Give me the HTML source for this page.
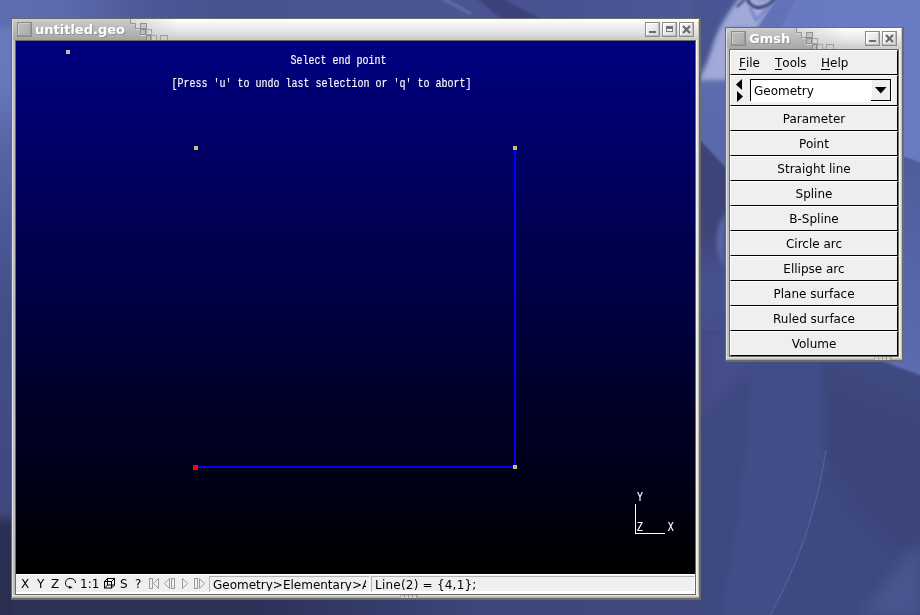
<!DOCTYPE html>
<html>
<head>
<meta charset="utf-8">
<title>Gmsh</title>
<style>
html,body{margin:0;padding:0;}
body{width:920px;height:615px;overflow:hidden;position:relative;
  font-family:"DejaVu Sans","Liberation Sans",sans-serif;font-size:12px;color:#000;
  background:#46508a;}
#desk{position:absolute;left:0;top:0;width:920px;height:615px;}
.abs{position:absolute;}
.win{position:absolute;background:#c4c4c4;will-change:transform;}
.win .o1{position:absolute;left:0;top:0;right:0;bottom:0;background:#6a6a66;}
.win .o2{position:absolute;left:1px;top:1px;right:2px;bottom:2px;background:linear-gradient(to right,#dedede,#e4e4e4 120px,#ffffff 170px);}
.win .o3{position:absolute;left:2px;top:2px;right:2px;bottom:2px;
  background:linear-gradient(to bottom,#c8c8c8 0px,#c0c0c0 22px,#c0c0c0 100%);}
.rb{position:absolute;top:2px;bottom:2px;right:2px;width:3px;background:linear-gradient(to right,#ffffff,#e2e2e2 50%,#b4b4b4);}
.tb{position:absolute;left:2px;top:1px;right:3px;height:21px;}
.tbl{position:absolute;left:0;top:0;height:21px;background:linear-gradient(to bottom,#cdcdcd 0,#c2c2c2 4px,#b4b4b4 12px,#a2a2a2 21px);}
.tbr{position:absolute;top:0;right:0;height:21px;background:linear-gradient(to bottom,#ffffff 0,#f4f4f4 4px,#e2e2e2 12px,#c9c9c9 21px);}
.title{position:absolute;top:0;height:21px;line-height:21px;font-weight:bold;font-size:13px;color:#fff;
  text-shadow:1px 1px 0 rgba(70,70,70,0.3);white-space:nowrap;}
.mbtn{position:absolute;width:15px;height:15px;box-sizing:border-box;border:1px solid #8a8a8a;
  background:linear-gradient(135deg,#c0c0c0,#a8a8a8);box-shadow:inset -1px -1px 0 #989898, inset 1px 1px 0 #cccccc;}
.wbtn{position:absolute;width:15px;height:15px;box-sizing:border-box;border:1px solid #8c8c8c;
  background:linear-gradient(135deg,#fbfbfb,#d6d6d6);box-shadow:inset -1px -1px 0 #bdbdbd, inset 1px 1px 0 #ffffff;}
.mi b{font-weight:normal;display:inline-block;position:relative;}
.mi b::after{content:"";position:absolute;left:0;right:0;top:18px;height:1px;background:#000;}
.mono{font-family:"Liberation Mono","DejaVu Sans Mono",monospace;}
.row{position:absolute;left:0;width:168px;height:25px;box-sizing:border-box;background:#efefef;
  border-top:1px solid #fff;border-left:1px solid #fff;border-bottom:1px solid #000;border-right:1px solid #000;
  text-align:center;line-height:25px;white-space:nowrap;}
</style>
</head>
<body>
<svg id="desk" width="920" height="615" viewBox="0 0 920 615">
  <defs>
    <linearGradient id="lft" gradientUnits="userSpaceOnUse" x1="0" y1="0" x2="0" y2="615"><stop offset="0.0000" stop-color="#5e6cb0"/><stop offset="0.0358" stop-color="#5e6cb0"/><stop offset="0.0553" stop-color="#6a7ac0"/><stop offset="0.1463" stop-color="#6676ba"/><stop offset="0.2439" stop-color="#5663a4"/><stop offset="0.4878" stop-color="#444f8a"/><stop offset="0.7317" stop-color="#404982"/><stop offset="0.8325" stop-color="#3e477e"/><stop offset="0.8537" stop-color="#2b3054"/><stop offset="1.0000" stop-color="#2a2e50"/></linearGradient>
    <linearGradient id="topg" x1="0" y1="0" x2="1" y2="0"><stop offset="0.0000" stop-color="#5e6cb0"/><stop offset="0.0652" stop-color="#5c6aae"/><stop offset="0.1630" stop-color="#4d5796"/><stop offset="0.2391" stop-color="#48528f"/><stop offset="0.4674" stop-color="#4a5592"/><stop offset="0.6087" stop-color="#485290"/><stop offset="0.7609" stop-color="#4e5896"/><stop offset="1.0000" stop-color="#4e5896"/></linearGradient>
    <linearGradient id="botg" x1="0" y1="0" x2="1" y2="0"><stop offset="0.0000" stop-color="#2b3056"/><stop offset="0.2717" stop-color="#2c3158"/><stop offset="0.4348" stop-color="#363e6e"/><stop offset="0.5109" stop-color="#3c4678"/><stop offset="0.7609" stop-color="#404a80"/><stop offset="0.8315" stop-color="#414b82"/><stop offset="0.8424" stop-color="#48548e"/><stop offset="1.0000" stop-color="#46528c"/></linearGradient>
    <linearGradient id="midg" gradientUnits="userSpaceOnUse" x1="0" y1="0" x2="0" y2="615"><stop offset="0.0000" stop-color="#4a5490"/><stop offset="0.0293" stop-color="#566098"/><stop offset="0.0390" stop-color="#98a2d2"/><stop offset="0.0732" stop-color="#909acc"/><stop offset="0.1138" stop-color="#6672b4"/><stop offset="0.1463" stop-color="#5c6aae"/><stop offset="0.2195" stop-color="#5a68ac"/><stop offset="0.3252" stop-color="#5a68ac"/><stop offset="0.3268" stop-color="#3c4478"/><stop offset="0.3740" stop-color="#3d4579"/><stop offset="0.4472" stop-color="#46508c"/><stop offset="1.0000" stop-color="#424c84"/></linearGradient>
    <linearGradient id="rgt" gradientUnits="userSpaceOnUse" x1="904" y1="0" x2="688.700" y2="576.300"><stop offset="0.0000" stop-color="#6c7cc4"/><stop offset="0.2362" stop-color="#6a7ac2"/><stop offset="0.2400" stop-color="#4f5c9c"/><stop offset="0.3047" stop-color="#5260a2"/><stop offset="0.4418" stop-color="#5866aa"/><stop offset="0.5333" stop-color="#5a68ae"/><stop offset="0.5592" stop-color="#5e6cb2"/><stop offset="0.5652" stop-color="#3f4a82"/><stop offset="0.6399" stop-color="#3c4679"/><stop offset="0.6094" stop-color="#3e4881" stop-opacity="0"/></linearGradient>
    <filter id="bl1" x="-20%" y="-20%" width="140%" height="140%"><feGaussianBlur stdDeviation="0.8"/></filter>
    <filter id="bl2" x="-20%" y="-20%" width="140%" height="140%"><feGaussianBlur stdDeviation="2"/></filter>
    <filter id="bl3" x="-20%" y="-20%" width="140%" height="140%"><feGaussianBlur stdDeviation="3"/></filter>
    <filter id="bl6" x="-30%" y="-30%" width="160%" height="160%"><feGaussianBlur stdDeviation="7"/></filter>
  </defs>
  <rect x="0" y="0" width="920" height="615" fill="#444e88"/>
  <rect x="0" y="0" width="920" height="22" fill="url(#topg)"/>
  <path d="M476 -2L502 -2L546 22L506 22Z" fill="#3b437a" filter="url(#bl1)"/>
  <path d="M438 -2L446 -2L474 14L468 14Z" fill="#606cab" filter="url(#bl1)"/>
  <rect x="0" y="596" width="920" height="19" fill="url(#botg)"/>
  <rect x="0" y="0" width="14" height="615" fill="url(#lft)"/>
  <!-- right block -->
  <rect x="698" y="0" width="222" height="615" fill="#3e4881"/>
  <rect x="698" y="0" width="30" height="330" fill="url(#midg)"/>
  <!-- top swoosh area -->
  <rect x="728" y="0" width="192" height="200" fill="#6a7ac2"/>
  <path d="M698 -4H777L757 28H728V80H698Z" fill="#a0a9d7" filter="url(#bl2)"/>
  <path d="M778 -2H796L780 30H757Z" fill="#6372b6" filter="url(#bl1)"/>
  <path d="M692 -6H742Q730 10 723 22T712 48T701 75L692 90Z" fill="#4a5492" filter="url(#bl2)"/>
  <path d="M750 8L756 20L774 2" fill="none" stroke="#7888cc" stroke-width="3" filter="url(#bl1)"/>
  <path d="M737 7L745 -1" fill="none" stroke="#3a4070" stroke-width="2" filter="url(#bl1)"/>
  <path d="M747 -1Q750 6 757 7.500T775 -1" fill="none" stroke="#3a4070" stroke-width="3" filter="url(#bl1)"/>
  <path d="M756 -1Q762 4 770 -1Z" fill="#8694cc" filter="url(#bl1)"/>
  <path d="M696 136L730 172V204H696Z" fill="#3c4478" filter="url(#bl1)"/>
  <!-- lens between windows -->
  <path d="M726 212Q708 236 724 268Z" fill="#5a66a8" filter="url(#bl2)"/>
  <!-- lower right block shading -->
  <g>
    <path d="M700 330H760V362L700 420Z" fill="#444e89" filter="url(#bl6)"/>
    <path d="M754 340H826V450Q812 540 770 615H720Q744 520 754 340Z" fill="#434e88" filter="url(#bl3)"/>
    <path d="M826 362H920V560Q860 520 826 450Z" fill="#3b4578" filter="url(#bl6)"/>
    <path d="M860 615L920 540V615Z" fill="#48548e" filter="url(#bl6)"/>
    <path d="M770 615Q812 540 826 450" fill="none" stroke="#5c69a6" stroke-width="1.200" opacity="0.700"/>
    <rect x="826" y="0" width="94" height="420" fill="url(#rgt)"/>
  </g>
</svg>

<!-- ================= main window ================= -->
<div class="win" style="left:11px;top:18px;width:690px;height:582px;">
  <div class="o1"></div><div class="o2"></div><div class="o3"></div><div class="rb"></div>
  <div class="tb">
    <svg class="abs" style="left:0;top:0" width="685" height="21" viewBox="0 0 685 21">
      <defs>
        <linearGradient id="gl685" x1="0" y1="0" x2="0" y2="1"><stop offset="0" stop-color="#cfcfcf"/><stop offset="0.2" stop-color="#c4c4c4"/><stop offset="0.6" stop-color="#b6b6b6"/><stop offset="1" stop-color="#a6a6a6"/></linearGradient>
        <linearGradient id="gr685" x1="0" y1="0" x2="0" y2="1"><stop offset="0" stop-color="#ffffff"/><stop offset="0.2" stop-color="#f6f6f6"/><stop offset="0.6" stop-color="#e4e4e4"/><stop offset="1" stop-color="#cacaca"/></linearGradient>
      </defs>
      <rect x="0" y="0" width="685" height="21" fill="url(#gl685)"/>
      <path d="M118 0V4H123V9H127V15H133V21H685V0Z" fill="url(#gr685)"/>
      <defs><linearGradient id="gh685" gradientUnits="userSpaceOnUse" x1="118.0" y1="0" x2="166.0" y2="0"><stop offset="0" stop-color="#b8b8b8" stop-opacity="0.5"/><stop offset="1" stop-color="#b8b8b8" stop-opacity="0"/></linearGradient></defs><path d="M118 0V4H123V9H127V15H133V21H685V0Z" fill="url(#gh685)"/>
      <path d="M117.5 0V4.5H122.5V9.5H127" fill="none" stroke="#969696"/>
      <path d="M118 5.5H121.5M123 10.5H127M127 16.5H133" fill="none" stroke="#d8d8d8"/>
      <rect x="127.5" y="4.5" width="6" height="5" fill="#c6c6c6" stroke="#929292"/>
      <rect x="127.5" y="10.5" width="5" height="5" fill="#bcbcbc" stroke="#8c8c8c"/>
      <rect x="133.5" y="10.5" width="5" height="5" fill="#d6d6d6" stroke="#a4a4a4"/>
      <rect x="133.5" y="16.5" width="4" height="5" fill="#bcbcbc" stroke="#8c8c8c"/>
      <rect x="138.5" y="16.5" width="5" height="5" fill="#d0d0d0" stroke="#a4a4a4"/>
      <rect x="147.5" y="16.5" width="7" height="5" fill="#cccccc" stroke="#a0a0a0"/>
    </svg>
    <div class="title" style="left:22px;">untitled.geo</div>
  </div>
  <div class="mbtn" style="left:6px;top:4px;"></div>
  <div class="wbtn" style="left:634px;top:4px;"><div class="abs" style="left:3px;top:8px;width:7px;height:2px;background:#6c6c6c"></div></div>
  <div class="wbtn" style="left:651px;top:4px;"><div class="abs" style="left:3px;top:3px;width:7px;height:6px;box-sizing:border-box;border:1px solid #787878;border-top:3px solid #6e6e6e;background:#f4f4f4"></div></div>
  <div class="wbtn" style="left:668px;top:4px;">
    <svg class="abs" style="left:0;top:0" width="13" height="13" viewBox="0 0 13 13"><path d="M3 3L10 10M10 3L3 10" stroke="#6a6a6a" stroke-width="2.200" fill="none"/></svg>
  </div>
  <!-- inner frame -->
  <div class="abs" style="left:4px;top:22px;width:681px;height:555px;background:#6a6a62;"></div>
  <!-- GL canvas -->
  <div class="abs" style="left:5px;top:23px;width:679px;height:533px;background:linear-gradient(to bottom,#000080,#000000);overflow:hidden;">
    <svg class="abs" style="left:0;top:0" width="679" height="533" viewBox="16 41 679 533" shape-rendering="crispEdges">
      <rect x="514" y="150" width="2" height="316" fill="#0000ff"/>
      <rect x="198" y="466" width="316" height="2" fill="#0000ff"/>
      <rect x="66" y="50" width="4" height="4" fill="#c8c6b2"/><rect x="67" y="51" width="2" height="2" fill="#b2b2ae"/>
      <rect x="194" y="146" width="4" height="4" fill="#c6c680"/><rect x="195" y="147" width="2" height="2" fill="#b4b47c"/>
      <rect x="513" y="146" width="4" height="4" fill="#c6c680"/><rect x="514" y="147" width="2" height="2" fill="#b4b47c"/>
      <rect x="513" y="465" width="4" height="4" fill="#c6c680"/><rect x="514" y="466" width="2" height="2" fill="#b4b47c"/>
      <rect x="193" y="465" width="5" height="5" fill="#ff0000"/>
      <rect x="635" y="504" width="1" height="30" fill="#ffffff"/>
      <rect x="635" y="533" width="30" height="1" fill="#ffffff"/>
      <g class="mono" fill="#ffffff" stroke="#ffffff" stroke-width="0.150" font-size="12.5" shape-rendering="auto" style="font-family:'Liberation Mono','DejaVu Sans Mono',monospace">
        <text x="290.500" y="64" textLength="96" lengthAdjust="spacingAndGlyphs">Select end point</text>
        <text x="171.500" y="87" textLength="300" lengthAdjust="spacingAndGlyphs">[Press 'u' to undo last selection or 'q' to abort]</text>
        <text x="637" y="501" textLength="6" lengthAdjust="spacingAndGlyphs">Y</text>
        <text x="637" y="531" textLength="6" lengthAdjust="spacingAndGlyphs">Z</text>
        <text x="667.800" y="531" textLength="6" lengthAdjust="spacingAndGlyphs">X</text>
      </g>
    </svg>
  </div>
  <!-- status bar -->
  <div class="abs" style="left:5px;top:556px;width:679px;height:20px;background:#efefef;box-shadow:inset 0 1px 0 #fff, inset 0 -2px 0 #fff;overflow:hidden;">
    <div class="abs" style="left:4px;top:0;line-height:20px;white-space:nowrap;">
      <span class="abs" style="left:1px">X</span><span class="abs" style="left:17px">Y</span><span class="abs" style="left:31px">Z</span>
      <span class="abs" style="left:60px">1:1</span><span class="abs" style="left:100px">S</span><span class="abs" style="left:115px">?</span>
    </div>
    <svg class="abs" style="left:0;top:0" width="210" height="20" viewBox="16 574 210 20" fill="none">
      <path d="M75.500 583A5 4.500 0 1 0 69.500 587.400" stroke="#000" stroke-width="1"/>
      <path d="M69 585.800l3.800 1.600l-3.800 1.400z" fill="#000"/>
      <g stroke="#000" stroke-width="1">
        <rect x="104.5" y="581.5" width="7" height="6.5"/>
        <rect x="107.5" y="578.5" width="7" height="6.5"/>
        <path d="M104.5 581.5l3-3M111.5 581.5l3-3M104.5 588l3-3M111.5 588l3-3"/>
      </g>
      <g stroke="#9c9c9c" stroke-width="1">
        <rect x="149.5" y="578.5" width="3" height="10"/><path d="M158.5 578.5v10l-5-5z"/>
        <path d="M169.5 578.5v10l-5-5z"/><rect x="171.500" y="578.5" width="3" height="10"/>
        <path d="M182.5 578.5v10l5-5z"/>
        <rect x="194.500" y="578.5" width="3" height="10"/><path d="M199.5 578.5v10l5-5z"/>
      </g>
    </svg>
    <div class="abs" style="left:193px;top:2px;width:161px;height:16px;box-sizing:border-box;border-left:1px solid #b4b4b4;border-top:1px solid #b4b4b4;border-right:1px solid #fff;border-bottom:1px solid #fff;overflow:hidden;">
      <div class="abs" style="left:0;top:0;width:156px;height:16px;overflow:hidden;"><div class="abs" style="left:3px;top:-2px;line-height:20px;white-space:nowrap;">Geometry&gt;Elementary&gt;Add</div></div>
    </div>
    <div class="abs" style="left:355px;top:2px;width:324px;height:16px;box-sizing:border-box;border-left:1px solid #b4b4b4;border-top:1px solid #b4b4b4;border-right:1px solid #fff;border-bottom:1px solid #fff;overflow:hidden;">
      <div class="abs" style="left:3px;top:-2px;line-height:20px;white-space:nowrap;letter-spacing:0.220px;">Line(2) = {4,1};</div>
    </div>
  </div>
  <!-- bottom grip -->
  <div class="abs" style="left:2px;top:577px;width:686px;height:3px;background:linear-gradient(to bottom,#f0f0f0,#c8c8c8,#a0a0a0);"></div>
  <svg class="abs" style="left:388px;top:577px" width="20" height="3" viewBox="0 0 20 3"><defs><linearGradient id="gg1" x1="0" y1="0" x2="1" y2="0"><stop offset="0" stop-color="#a8a8a8" stop-opacity="0"/><stop offset="0.12" stop-color="#a0a0a0"/><stop offset="0.88" stop-color="#a0a0a0"/><stop offset="1" stop-color="#a8a8a8" stop-opacity="0"/></linearGradient></defs><rect width="20" height="3" fill="url(#gg1)"/><rect x="2" y="0" width="3" height="3" fill="#d0d0d0"/><rect x="6" y="0" width="3" height="3" fill="#d0d0d0"/><rect x="10" y="0" width="3" height="3" fill="#d0d0d0"/><rect x="14" y="0" width="3" height="3" fill="#d0d0d0"/></svg>
</div>

<!-- ================= Gmsh menu window ================= -->
<div class="win" style="left:725px;top:27px;width:179px;height:335px;">
  <div class="o1"></div><div class="o2"></div><div class="o3"></div><div class="rb"></div>
  <div class="tb">
    <svg class="abs" style="left:0;top:0" width="174" height="21" viewBox="0 0 174 21">
      <defs>
        <linearGradient id="gl174" x1="0" y1="0" x2="0" y2="1"><stop offset="0" stop-color="#cfcfcf"/><stop offset="0.2" stop-color="#c4c4c4"/><stop offset="0.6" stop-color="#b6b6b6"/><stop offset="1" stop-color="#a6a6a6"/></linearGradient>
        <linearGradient id="gr174" x1="0" y1="0" x2="0" y2="1"><stop offset="0" stop-color="#ffffff"/><stop offset="0.2" stop-color="#f6f6f6"/><stop offset="0.6" stop-color="#e4e4e4"/><stop offset="1" stop-color="#cacaca"/></linearGradient>
      </defs>
      <rect x="0" y="0" width="174" height="21" fill="url(#gl174)"/>
      <path d="M70 0V4H75V9H79V15H85V21H174V0Z" fill="url(#gr174)"/>
      <defs><linearGradient id="gh174" gradientUnits="userSpaceOnUse" x1="70.0" y1="0" x2="118.0" y2="0"><stop offset="0" stop-color="#b8b8b8" stop-opacity="0.5"/><stop offset="1" stop-color="#b8b8b8" stop-opacity="0"/></linearGradient></defs><path d="M70 0V4H75V9H79V15H85V21H174V0Z" fill="url(#gh174)"/>
      <path d="M69.5 0V4.5H74.5V9.5H79" fill="none" stroke="#969696"/>
      <path d="M70 5.5H73.5M75 10.5H79M79 16.5H85" fill="none" stroke="#d8d8d8"/>
      <rect x="79.5" y="4.5" width="6" height="5" fill="#c6c6c6" stroke="#929292"/>
      <rect x="79.5" y="10.5" width="5" height="5" fill="#bcbcbc" stroke="#8c8c8c"/>
      <rect x="85.5" y="10.5" width="5" height="5" fill="#d6d6d6" stroke="#a4a4a4"/>
      <rect x="85.5" y="16.5" width="4" height="5" fill="#bcbcbc" stroke="#8c8c8c"/>
      <rect x="90.5" y="16.5" width="5" height="5" fill="#d0d0d0" stroke="#a4a4a4"/>
      <rect x="99.5" y="16.5" width="7" height="5" fill="#cccccc" stroke="#a0a0a0"/>
    </svg>
    <div class="title" style="left:22px;">Gmsh</div>
  </div>
  <div class="mbtn" style="left:6px;top:4px;"></div>
  <div class="wbtn" style="left:140px;top:4px;"><div class="abs" style="left:3px;top:8px;width:7px;height:2px;background:#6c6c6c"></div></div>
  <div class="wbtn" style="left:157px;top:4px;">
    <svg class="abs" style="left:0;top:0" width="13" height="13" viewBox="0 0 13 13"><path d="M3 3L10 10M10 3L3 10" stroke="#6a6a6a" stroke-width="2.200" fill="none"/></svg>
  </div>
  <div class="abs" style="left:4px;top:22px;width:170px;height:308px;background:#6a6a62;"></div>
  <div class="abs" style="left:5px;top:23px;width:168px;height:306px;background:#efefef;">
    <!-- menubar -->
    <div class="row" style="top:0;height:25px;text-align:left;">
      <span class="abs mi" style="left:8px;top:0"><b>F</b>ile</span>
      <span class="abs mi" style="left:44px;top:0"><b>T</b>ools</span>
      <span class="abs mi" style="left:90px;top:0"><b>H</b>elp</span>
    </div>
    <div class="row" style="top:25px;height:31px;">
      <svg class="abs" style="left:0;top:0" width="166" height="29" viewBox="731 76 166 29">
        <path d="M742 79v11l-6-5.500z" fill="#000"/>
        <path d="M737 91v11l6-5.500z" fill="#000"/>
        <rect x="750" y="79" width="142" height="23" fill="#fff"/>
        <rect x="750" y="79" width="141" height="1" fill="#000"/>
        <rect x="750" y="79" width="1" height="22" fill="#000"/>
        <rect x="872" y="80" width="18" height="20" fill="#efefef"/>
        <rect x="871" y="100" width="20" height="1" fill="#000"/>
        <rect x="890" y="80" width="1" height="21" fill="#000"/>
        <path d="M875 87h11.500l-5.750 6.500z" fill="#000"/>
      </svg>
      <span class="abs" style="left:23px;top:3px;">Geometry</span>
    </div>
    <div class="row" style="top:56px;">Parameter</div>
    <div class="row" style="top:81px;">Point</div>
    <div class="row" style="top:106px;">Straight line</div>
    <div class="row" style="top:131px;">Spline</div>
    <div class="row" style="top:156px;">B-Spline</div>
    <div class="row" style="top:181px;">Circle arc</div>
    <div class="row" style="top:206px;">Ellipse arc</div>
    <div class="row" style="top:231px;">Plane surface</div>
    <div class="row" style="top:256px;">Ruled surface</div>
    <div class="row" style="top:281px;">Volume</div>
  </div>
  <div class="abs" style="left:2px;top:330px;width:175px;height:3px;background:linear-gradient(to bottom,#f0f0f0,#c8c8c8,#a0a0a0);"></div>
  <svg class="abs" style="left:148px;top:330px" width="20" height="3" viewBox="0 0 20 3"><defs><linearGradient id="gg2" x1="0" y1="0" x2="1" y2="0"><stop offset="0" stop-color="#a8a8a8" stop-opacity="0"/><stop offset="0.12" stop-color="#a0a0a0"/><stop offset="0.88" stop-color="#a0a0a0"/><stop offset="1" stop-color="#a8a8a8" stop-opacity="0"/></linearGradient></defs><rect width="20" height="3" fill="url(#gg2)"/><rect x="2" y="0" width="3" height="3" fill="#d0d0d0"/><rect x="6" y="0" width="3" height="3" fill="#d0d0d0"/><rect x="10" y="0" width="3" height="3" fill="#d0d0d0"/><rect x="14" y="0" width="3" height="3" fill="#d0d0d0"/></svg>
</div>
</body>
</html>
